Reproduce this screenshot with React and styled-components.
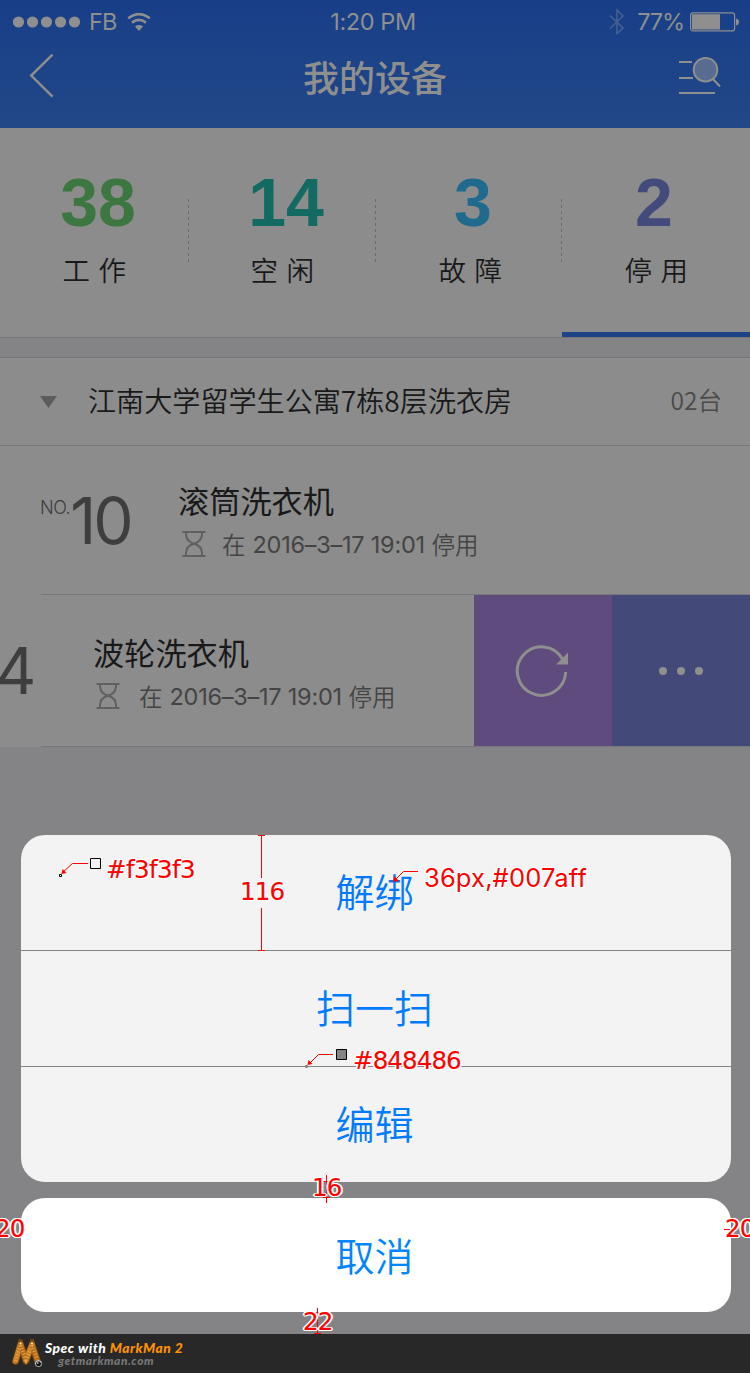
import React from 'react';
import styled, { createGlobalStyle } from 'styled-components';

const cjk = '"Noto Sans CJK SC", sans-serif';

const GlobalStyle = createGlobalStyle`
  * { box-sizing: border-box; }
  body { margin: 0; background: #848486; font-family: ${cjk}; }
`;

const Screen = styled.div`
  position: relative;
  width: 750px;
  height: 1373px;
  overflow: hidden;
  display: flex;
  flex-direction: column;
  background: #848486;
`;

const Header = styled.header`
  height: 128px;
  flex: none;
  background: linear-gradient(#183e88, #224888);
  color: #8f8f8f;
`;

const StatusBar = styled.div`
  display: grid;
  grid-template-columns: 1fr auto 1fr;
  align-items: center;
  height: 44px;
  padding: 0 11px 0 13px;
  font: 400 23.5px/44px Inter, sans-serif;
`;

const StatusGroup = styled.div`
  display: flex;
  align-items: center;
  justify-content: ${(p) => (p.$end ? 'flex-end' : 'flex-start')};
`;

const Carrier = styled.span`
  margin: 0 11px 0 8px;
  letter-spacing: -0.9px;
`;

const Clock = styled.span`
  letter-spacing: -0.4px;
  padding-right: 6px;
`;

const Percent = styled.span`
  margin: 0 6px 0 12px;
  letter-spacing: -1.1px;
`;

const NavBar = styled.div`
  display: grid;
  grid-template-columns: 100px 1fr 100px;
  align-items: center;
  height: 64px;
  svg { display: block; }
`;

const Title = styled.h1`
  margin: 0;
  text-align: center;
  font: 500 36px/64px ${cjk};
`;

const Back = styled.div`padding-left: 29px;`;
const Search = styled.div`padding: 0 0 2px 28px;`;

const Tabs = styled.nav`
  display: grid;
  grid-template-columns: 189px 187px 186px 188px;
  height: 210px;
  flex: none;
  background: #8c8c8c;
  border-bottom: 1px solid #777779;
`;

const Tab = styled.div`
  display: flex;
  flex-direction: column;
  align-items: center;
  padding-top: 43px;
  border-bottom: 5px solid ${(p) => (p.$active ? '#1c4487' : 'transparent')};
  background: ${(p) =>
    p.$active
      ? 'none'
      : 'repeating-linear-gradient(#6c6c6c 0 3px, transparent 3px 6px) right 71px / 1px 63px no-repeat'};
`;

const Count = styled.div`
  font: bold 68px/62px "Liberation Sans", Arial, sans-serif;
  margin-left: ${(p) => p.$shift || 0}px;
  color: ${(p) => p.$color};
`;

const TabLabel = styled.div`
  margin-top: 16px;
  padding-left: ${(p) => p.$inset}px;
  font: 350 27.5px/40px ${cjk};
  letter-spacing: 8.5px;
  color: #19191a;
`;

const GroupHeader = styled.div`
  display: flex;
  align-items: center;
  height: 89px;
  flex: none;
  margin-top: 19px;
  padding: 0 28px 0 40px;
  background: #8c8c8c;
  border-top: 1px solid #777779;
  border-bottom: 1px solid #777779;
  color: #19191a;
`;

const GroupName = styled.div`
  flex: 1;
  padding: 0 0 4px 31px;
  font: 350 28.1px/80px ${cjk};
`;

const GroupCount = styled.div`
  padding-bottom: 3px;
  font: 350 24.5px/80px ${cjk};
  color: #4a4a4a;
`;

const Row = styled.div`
  display: flex;
  height: ${(p) => p.$height}px;
  flex: none;
  background: linear-gradient(#777779, #777779) 41px bottom / 100% 1px no-repeat #8c8c8c;
`;

const NumberBox = styled.div`
  display: flex;
  width: ${(p) => p.$width}px;
  flex: none;
  padding: ${(p) => p.$pad};
  color: #3e3e3e;
`;

const NoPrefix = styled.span`
  font: 350 18px/24px Inter, sans-serif;
  letter-spacing: -0.5px;
  padding-top: 11px;
`;

const BigNumber = styled.span`
  margin-left: ${(p) => p.$shift || 0}px;
  font: 400 64px/72px Inter, sans-serif;
  letter-spacing: -3px;
`;

const Machine = styled.div`
  flex: 1;
  padding-top: ${(p) => p.$top}px;
`;

const MachineName = styled.div`
  font: 400 31.2px/44px ${cjk};
  color: #19191a;
`;

const StateLine = styled.div`
  display: flex;
  align-items: center;
  height: 44px;
  padding-left: ${(p) => p.$inset}px;
  font: 350 23.5px/44px ${cjk};
  color: #444;
  svg { margin-right: ${(p) => p.$gap}px; }
`;

const Stamp = styled.span`
  width: 172px;
  margin: 0 7px;
  padding-top: 2px;
  font: 400 23.5px/44px Inter, sans-serif;
  letter-spacing: -0.25px;
  white-space: nowrap;
`;

const Action = styled.div`
  display: flex;
  align-items: center;
  justify-content: center;
  width: 138px;
  margin-bottom: 1px;
  padding-right: ${(p) => p.$nudge || 0}px;
  background: ${(p) => p.$color};
`;

const Sheet = styled.div`
  flex: none;
  width: 710px;
  margin: ${(p) => p.$top}px 0 0 21px;
  overflow: hidden;
  border-radius: 24px;
  background: ${(p) => p.$color};
`;

const SheetItem = styled.div`
  height: ${(p) => p.$height}px;
  border-bottom: ${(p) => (p.$line ? '1px solid #848486' : 'none')};
  padding-right: 3px;
  text-align: center;
  font: 350 39px/${(p) => p.$lead}px ${cjk};
  color: ${(p) => p.$ink || '#007aff'};
`;

const Footer = styled.footer`
  display: flex;
  height: 39px;
  flex: none;
  margin-top: 22px;
  padding: 5px 0 0 10px;
  background: #282828;
`;

const Credit = styled.div`
  padding-left: 1px;
  font: italic 900 13.8px/17px Lato, sans-serif;
  letter-spacing: 0.5px;
  color: #fff;
  white-space: nowrap;
`;
const Brand = styled.span`color: #ff9200;`;
const Site = styled.div`
  padding-left: 13px;
  font-size: 12px;
  line-height: 10px;
  color: #777;
`;

const Marks = styled.div`
  position: absolute;
  inset: 0;
  pointer-events: none;
  svg { position: absolute; inset: 0; }
`;

const Mark = styled.span`
  position: absolute;
  left: ${(p) => p.$x}px;
  top: ${(p) => p.$y}px;
  font: ${(p) => p.$size || 24.5}px/28px ${(p) => p.$font || '"DejaVu Sans"'}, sans-serif;
  letter-spacing: ${(p) => p.$track ?? -0.9}px;
  white-space: nowrap;
  color: #f00;
  text-shadow: 1px 0 #fff, -1px 0 #fff, 0 1px #fff, 0 -1px #fff,
    1px 1px #fff, -1px -1px #fff, 1px -1px #fff, -1px 1px #fff, 2px 0 #fff, -2px 0 #fff;
  -webkit-text-stroke: ${(p) => (p.$font ? 0 : 0.15)}px #f00;
`;

const ink = '#8f8f8f';

const Signal = () => (
  <svg width="68" height="12" fill={ink}>
    {[5.5, 19.5, 33.5, 47.5, 61.5].map((x) => <circle key={x} cx={x} cy="6" r="5.6" />)}
  </svg>
);

const Wifi = () => (
  <svg width="24" height="18" viewBox="0 0 24 18" fill="none" stroke={ink} strokeWidth="2.6">
    <path d="M1.200 5.200Q12-3 22.800 5.200M5 9.600q7-5.400 14 0" />
    <path d="M8 13.400q4-2.800 8 0L12 18z" fill={ink} stroke="none" />
  </svg>
);

const Bluetooth = () => (
  <svg width="16" height="28" viewBox="0 0 16 28" fill="none" stroke="#4a6090" strokeWidth="1.5">
    <path d="M1 7.500 14 20 8 25.500V2l6 6L1 20.500" />
  </svg>
);

const Battery = () => (
  <svg width="49" height="20" viewBox="0 0 49 20">
    <rect x=".6" y=".9" width="44" height="18" rx="2.5" fill="none" stroke={ink} strokeWidth="1.2" />
    <path d="M2 2.300h28v15.200H2zM46 6.500q3 .5 3 3.500t-3 3.500z" fill={ink} />
  </svg>
);

const Chevron = () => (
  <svg width="26" height="44" viewBox="0 0 26 44" fill="none" stroke={ink} strokeWidth="2.4">
    <path d="M23.500 .6 2.200 21.600 23.500 42.600" />
  </svg>
);

const ListSearch = () => (
  <svg width="44" height="40" viewBox="0 0 44 40" fill="none" stroke={ink} strokeWidth="2">
    <path d="M1 7h13M1 23h14M1 38h36M34.500 23.500l7.500 8" />
    <circle cx="27.5" cy="14.7" r="11.8" fill="#586b90" />
  </svg>
);

const Hourglass = () => (
  <svg width="24" height="26" viewBox="0 0 24 26" fill="none" stroke="#606060" strokeWidth="2">
    <path d="M.5 1h23M.5 25h23M4 1v2c0 6 4 8.500 8 9.800 4-1.300 8-3.800 8-9.800V1M4 25v-3c0-5.500 4-8 8-9.200 4 1.200 8 3.700 8 9.200v3" />
  </svg>
);

const Refresh = () => (
  <svg width="54" height="54" viewBox="0 0 54 54">
    <path d="M47.500 15A24.200 24.200 0 1 0 50.700 28" fill="none" stroke={ink} strokeWidth="3" />
    <path d="M53 8.500V20.500H41z" fill={ink} />
  </svg>
);

const Dots = () => (
  <svg width="46" height="10" fill={ink}>
    {[5, 23, 41].map((x) => <circle key={x} cx={x} cy="5" r="4" />)}
  </svg>
);

const Worm = () => (
  <svg width="34" height="30" viewBox="0 0 34 30" fill="none" strokeLinecap="round">
    <g stroke="#75420f" strokeWidth="7">
      <path d="M5.500 22.500 10.500 6l5.500 16M16 22l6-16 6 18" />
    </g>
    <g stroke="#c98028" strokeWidth="5.5">
      <path d="M5.500 22 10.500 5.500M16 21l6-15.500" />
      <path d="M10.500 5.500l5.500 15.500M22 5.500l6 18" stroke="#b56c1c" />
    </g>
    <g stroke="#e3a548" strokeWidth="3.5" strokeLinecap="butt" strokeDasharray="1 2">
      <path d="M5.500 22 10.500 5.500l5.500 15.500 6-15.500 5.500 16" />
    </g>
    <circle cx="10.500" cy="4.500" r="1" fill="#fff3d0" />
    <circle cx="22" cy="4.500" r="1" fill="#fff3d0" />
    <circle cx="28.500" cy="24.500" r="3.600" fill="#fff" stroke="#333" strokeWidth=".6" />
    <circle cx="28.500" cy="24.800" r="2.500" fill="#111" />
    <circle cx="27.800" cy="24" r=".8" fill="#fff" />
  </svg>
);

const tabs = [
  { n: '38', label: '工作', color: '#3c7640', shift: 7, inset: 8 },
  { n: '14', label: '空闲', color: '#136a63', shift: 7, inset: 8 },
  { n: '3', label: '故障', color: '#1f6a8d', shift: 8, inset: 11 },
  { n: '2', label: '停用', color: '#434a7c', shift: -4, inset: 9 },
];

const State = ({ gap, inset }) => (
  <StateLine $gap={gap} $inset={inset}>
    <Hourglass />在<Stamp>2016–3–17 19:01</Stamp>停用
  </StateLine>
);

export default function App() {
  return (
    <Screen>
      <GlobalStyle />
      <Header>
        <StatusBar>
          <StatusGroup><Signal /><Carrier>FB</Carrier><Wifi /></StatusGroup>
          <Clock>1:20 PM</Clock>
          <StatusGroup $end><Bluetooth /><Percent>77%</Percent><Battery /></StatusGroup>
        </StatusBar>
        <NavBar>
          <Back><Chevron /></Back>
          <Title>我的设备</Title>
          <Search><ListSearch /></Search>
        </NavBar>
      </Header>
      <Tabs>
        {tabs.map((t, i) => (
          <Tab key={t.n} $active={i === 3}>
            <Count $color={t.color} $shift={t.shift}>{t.n}</Count>
            <TabLabel $inset={t.inset}>{t.label}</TabLabel>
          </Tab>
        ))}
      </Tabs>
      <GroupHeader>
        <svg width="17" height="12"><path d="M0 0h17L8.500 12z" fill="#5c5c5c" /></svg>
        <GroupName>江南大学留学生公寓7栋8层洗衣房</GroupName>
        <GroupCount>02台</GroupCount>
      </GroupHeader>
      <Row $height={149}>
        <NumberBox $width={178} $pad="39px 0 0 40px">
          <NoPrefix>NO.</NoPrefix><BigNumber>10</BigNumber>
        </NumberBox>
        <Machine $top={32}>
          <MachineName>滚筒洗衣机</MachineName>
          <State gap={16} inset={4} />
        </Machine>
      </Row>
      <Row $height={152}>
        <NumberBox $width={93} $pad="40px 0 0 0">
          <BigNumber $shift={-5}>4</BigNumber>
        </NumberBox>
        <Machine $top={35}>
          <MachineName>波轮洗衣机</MachineName>
          <State gap={19} inset={3} />
        </Machine>
        <Action $color="#5f4b7e" $nudge={2}><Refresh /></Action>
        <Action $color="#434a7a"><Dots /></Action>
      </Row>
      <Sheet $top={88} $color="#f3f3f3">
        <SheetItem $height={116} $lead={110} $line>解绑</SheetItem>
        <SheetItem $height={116} $lead={110} $line>扫一扫</SheetItem>
        <SheetItem $height={115} $lead={110}>编辑</SheetItem>
      </Sheet>
      <Sheet $top={16} $color="#fff">
        <SheetItem $height={114} $lead={112} $ink="#0084ff">取消</SheetItem>
      </Sheet>
      <Footer>
        <Worm />
        <Credit>
          Spec with <Brand>MarkMan 2</Brand>
          <Site>getmarkman.com</Site>
        </Credit>
      </Footer>
      <Marks>
        <svg width="750" height="1373" fill="none" stroke="#f00">
          <path d="M261.500 835V951" />
          <path d="M258 835.500h7M258 950.500h7M88 863.500H72.500L63 872M418 871.500H403.500L396 879M333 1054.500H318.500L309 1064M326.500 1175v28M323 1181.500h7M323 1197.500h7M317.500 1308v26M314 1333.500h7M20 1229.500h6M724 1229.500h6" />
          <path d="M61.500 874l1-5 4 4zM393 882l1-6 5 5zM307.500 1065l1-5 4 4z" fill="#f00" stroke="none" />
          <path d="M90.500 858.500h10v10h-10zM59.500 874.500h2v2h-2z" fill="#f3f3f3" stroke="#000" />
          <path d="M336.500 1049.500h10v10h-10z" fill="#848486" stroke="#000" />
          <path d="M305.500 1065.500h2v2h-2z" stroke="#848486" />
          <path d="M240 878h44v30h-44z" fill="#f3f3f3" stroke="none" />
        </svg>
        <Mark $x={106} $y={856} $track={-0.6}>#f3f3f3</Mark>
        <Mark $x={240} $y={878}>116</Mark>
        <Mark $x={424} $y={864} $font="Inter" $size={25.5} $track={0.15}>36px,#007aff</Mark>
        <Mark $x={353} $y={1047}>#848486</Mark>
        <Mark $x={312} $y={1174}>16</Mark>
        <Mark $x={303} $y={1308}>22</Mark>
        <Mark $x={-5} $y={1215}>20</Mark>
        <Mark $x={725} $y={1215}>20</Mark>
      </Marks>
    </Screen>
  );
}
